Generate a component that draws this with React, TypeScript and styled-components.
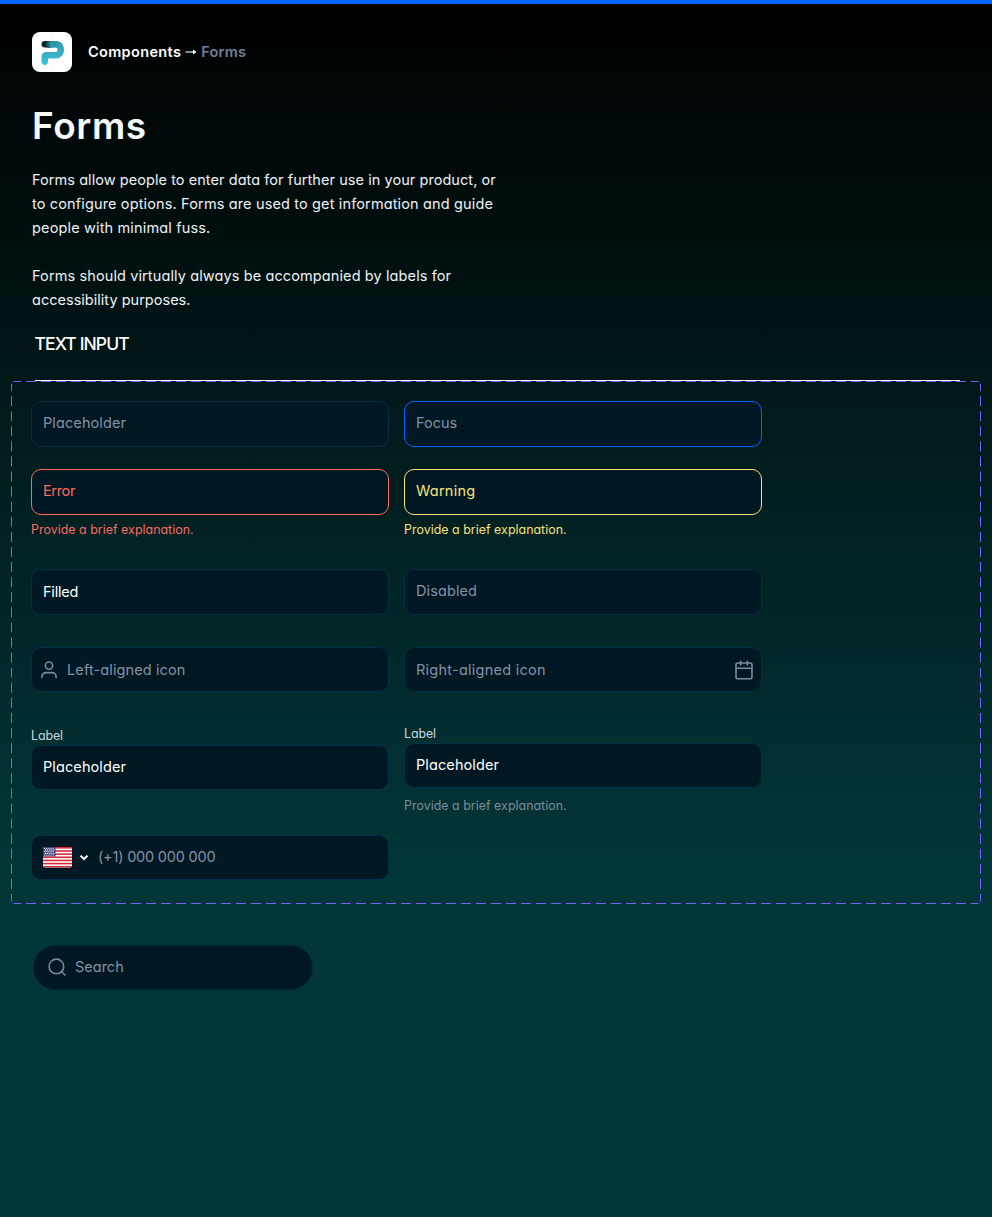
import React from "react";
import styled, { createGlobalStyle } from "styled-components";

const GlobalStyle = createGlobalStyle`
  * { box-sizing: border-box; }
  body {
    margin: 0;
    font-family: Inter, "Open Sans", sans-serif;
    font-feature-settings: "cv11";
    color: #fff;
  }
`;

const Page = styled.main`
  width: 992px;
  height: 1217px;
  border-top: 4px solid #0166ff;
  background: linear-gradient(180deg, #000 0, #023638 866px);
  overflow: hidden;
`;

const Header = styled.header`
  display: flex;
  align-items: center;
  gap: 16px;
  padding: 28px 32px 0;
`;

const Breadcrumb = styled.nav`
  display: flex;
  align-items: center;
  font-size: 14.5px;
  font-weight: 600;
  line-height: 24px;
`;

const Crumb = styled.span<{ $muted?: boolean; $track: number }>`
  color: ${(p) => (p.$muted ? "#718096" : "#fff")};
  letter-spacing: ${(p) => p.$track}px;
`;

const Arrow = styled.svg`
  margin: 0 4px 0 4px;
`;

const Title = styled.h1`
  margin: 30px 32px 0;
  font-size: 37px;
  font-weight: 600;
  line-height: 48px;
  letter-spacing: 0.6px;
  color: #f7fafc;
`;

const Intro = styled.div`
  margin: 18px 32px 0;
  font-size: 14.5px;
  line-height: 24px;
  color: #eef2f5;
`;

const Line = styled.p<{ $track: number; $gap?: boolean }>`
  margin: ${(p) => (p.$gap ? 24 : 0)}px 0 0;
  letter-spacing: ${(p) => p.$track}px;
  white-space: nowrap;
`;

const SectionTitle = styled.h2`
  width: 925px;
  height: 69px;
  margin: 0 0 0 35px;
  padding-top: 20px;
  border-bottom: 1px solid #fff;
  font-size: 17.5px;
  font-weight: 500;
  line-height: 24px;
  letter-spacing: -0.9px;
  text-indent: -0.5px;
`;

const Showcase = styled.section`
  position: relative;
  width: 970px;
  height: 523px;
  margin-left: 11px;
  padding: 20px 20px 0;
`;

const DashedFrame = styled.svg`
  position: absolute;
  inset: 0;
  pointer-events: none;
`;

const Columns = styled.div`
  display: grid;
  grid-template-columns: 358px 358px;
  column-gap: 15px;
`;

const Column = styled.div`
  display: flex;
  flex-direction: column;
`;

const Group = styled.div<{ $top?: number }>`
  display: flex;
  flex-direction: column;
  margin-top: ${(p) => p.$top ?? 0}px;
`;

const Field = styled.div<{ $border?: string; $h?: number; $left?: number }>`
  display: flex;
  align-items: center;
  height: ${(p) => p.$h ?? 46}px;
  padding: 0 7px 0 ${(p) => p.$left ?? 11}px;
  border: 1px solid ${(p) => p.$border ?? "#00304b"};
  border-radius: 10px;
  background: #001824;
`;

const Value = styled.span<{ $color?: string; $track?: number; $up?: number }>`
  font-size: 14.5px;
  line-height: 20px;
  padding-bottom: ${(p) => p.$up ?? 2}px;
  color: ${(p) => p.$color ?? "#8592a5"};
  letter-spacing: ${(p) => p.$track ?? 0}px;
  white-space: nowrap;
`;

const Note = styled.span<{ $color: string; $track?: number }>`
  height: 20px;
  font-size: 12.4px;
  line-height: 20px;
  color: ${(p) => p.$color};
  letter-spacing: ${(p) => p.$track ?? 0.03}px;
`;

const FieldLabel = styled(Note)`
  line-height: 22px;
`;

const Spacer = styled.span<{ $w?: number }>`
  flex: ${(p) => (p.$w ? `0 0 ${p.$w}px` : "1")};
`;

const SearchField = styled(Field)`
  width: 280px;
  margin: 41px 0 0 33px;
  padding-bottom: 1px;
  border-color: #002438;
  border-radius: 23px;
`;

const Logo = () => (
  <svg width="40" height="40" viewBox="0 0 40 40">
    <defs>
      <linearGradient id="teal" x1="0" y1="0" x2="0" y2="1">
        <stop offset="0" stopColor="#2b98aa" />
        <stop offset="1" stopColor="#43c3dc" />
      </linearGradient>
    </defs>
    <rect width="40" height="40" rx="8" fill="#fff" />
    <path d="M20.5 0V40M6 34L34 6M6 6L34 34" stroke="#f1f2f3" strokeWidth="0.4" />
    <path
      d="M17 9H24C29 9 32 13 32 17.7C32 23 28.5 26.4 24 26.4H16V29.3C16 31.8 14.8 33 12.8 33C10.8 33 9.5 31.6 9.5 29.5V25C9.5 22 11.5 20.1 14 20.1H22.6C24.6 20.1 25.6 19.3 25.6 17.9C25.6 16.4 24.5 15.6 22.8 15.6H17Z"
      fill="url(#teal)"
    />
    <path d="M12.8 9H18V15.6H12.8A3.3 3.3 0 0 1 12.8 9Z" fill="#08252c" />
    <circle cx="16.5" cy="12.3" r="3.3" fill="#103e49" />
    <circle cx="18.6" cy="12.3" r="3.3" fill="#1d6b7a" />
    <circle cx="20.8" cy="12.3" r="3.3" fill="#2b98aa" />
  </svg>
);

const UserIcon = () => (
  <svg width="18" height="18" viewBox="0 0 18 18" fill="none" stroke="#7b899d" strokeWidth="1.6" strokeLinecap="round">
    <circle cx="9" cy="4.6" r="3.6" />
    <path d="M1.9 16.6V15.8A4.2 4.2 0 0 1 6.1 11.6H11.9A4.2 4.2 0 0 1 16.1 15.8V16.6" />
  </svg>
);

const CalendarIcon = () => (
  <svg width="20" height="20" viewBox="0 0 20 20" fill="none" stroke="#7b899d" strokeWidth="1.6" strokeLinecap="round">
    <rect x="2" y="3" width="16" height="15.7" rx="2" />
    <path d="M2 8.2H18M6.7 1.4V5M13.3 1.4V5" />
  </svg>
);

const SearchIcon = () => (
  <svg width="18" height="18" viewBox="0 0 18 18" fill="none" stroke="#7b899d" strokeWidth="1.6" strokeLinecap="round">
    <circle cx="8.4" cy="8.4" r="7.3" />
    <path d="M13.7 13.7L17 17" />
  </svg>
);

const Chevron = () => (
  <svg width="10" height="8" viewBox="0 0 10 8" fill="none" stroke="#fff" strokeWidth="2">
    <path d="M1.5 1.6L5 5L8.5 1.6" />
  </svg>
);

const Flag = () => (
  <svg width="29" height="21" viewBox="0 0 29 21">
    <defs>
      <clipPath id="flag"><rect width="29" height="20.5" rx="2" /></clipPath>
    </defs>
    <g clipPath="url(#flag)">
      <rect width="29" height="21" fill="#fff" />
      {[0, 1, 2, 3, 4, 5, 6].map((i) => (
        <rect key={i} y={i * 3.16} width="29" height="1.58" fill="#d62839" />
      ))}
      <rect width="12.5" height="9.4" fill="#3c3b76" />
      {[0, 1, 2, 3, 4].map((r) =>
        [0, 1, 2, 3, 4].map((c) => (
          <circle key={`${r}-${c}`} cx={1.7 + c * 2.1 + (r % 2) * 0.8} cy={1.3 + r * 1.7} r="0.65" fill="#fff" />
        ))
      )}
    </g>
  </svg>
);

const red = "#fc6a60";
const yellow = "#fbe27b";

export default function App() {
  return (
    <>
      <GlobalStyle />
      <Page>
        <Header>
          <Logo />
          <Breadcrumb>
            <Crumb $track={0.35}>Components</Crumb>
            <Arrow width="12" height="8" viewBox="0 0 12 8" fill="none" stroke="#fff" strokeWidth="1.1">
              <path d="M0.5 4H10.5" />
              <path d="M8 1.6L11.4 4L8 6.4Z" fill="#fff" stroke="none" />
            </Arrow>
            <Crumb $muted $track={0.25}>Forms</Crumb>
          </Breadcrumb>
        </Header>
        <Title>Forms</Title>
        <Intro>
          <Line $track={0.06}>Forms allow people to enter data for further use in your product, or</Line>
          <Line $track={0.14}>to configure options. Forms are used to get information and guide</Line>
          <Line $track={0.15}>people with minimal fuss.</Line>
          <Line $track={0.11} $gap>Forms should virtually always be accompanied by labels for</Line>
          <Line $track={0.02}>accessibility purposes.</Line>
        </Intro>
        <SectionTitle>TEXT INPUT</SectionTitle>
        <Showcase>
          <DashedFrame width="970" height="523" fill="none" stroke="#7b61ff">
            <path d="M3 0.5H967M3 522.5H967" strokeDasharray="10 5" strokeDashoffset="3" />
            <path d="M0.5 3V520M969.5 3V520" strokeDasharray="10 5.088" strokeDashoffset="3" />
            <path d="M0.5 3Q0.5 0.5 3 0.5M967 0.5Q969.5 0.5 969.5 3M969.5 520Q969.5 522.5 967 522.5M3 522.5Q0.5 522.5 0.5 520" opacity="0.35" />
          </DashedFrame>
          <Columns>
            <Column>
              <Field><Value $track={0.1}>Placeholder</Value></Field>
              <Group $top={22}>
                <Field $border={red}><Value $color={red} $track={-0.35}>Error</Value></Field>
                <Group $top={5}><Note $color={red}>Provide a brief explanation.</Note></Group>
              </Group>
              <Group $top={29}>
                <Field><Value $color="#fff" $up={0} $track={-0.2}>Filled</Value></Field>
              </Group>
              <Group $top={32}>
                <Field $h={45} $left={8}>
                  <UserIcon /><Spacer $w={9} /><Value $up={0} $track={0.12}>Left-aligned icon</Value>
                </Field>
              </Group>
              <Group $top={33}>
                <FieldLabel $color="#cbd5e0" $track={-0.1}>Label</FieldLabel>
                <Field $h={45}><Value $color="#fff" $up={2} $track={0.1}>Placeholder</Value></Field>
              </Group>
              <Group $top={45}>
                <Field $h={45}>
                  <Flag /><Spacer $w={7} /><Chevron /><Spacer $w={9} /><Value $up={1} $track={-0.2}>(+1) 000 000 000</Value>
                </Field>
              </Group>
            </Column>
            <Column>
              <Field $border="#0166ff"><Value>Focus</Value></Field>
              <Group $top={22}>
                <Field $border={yellow}><Value $color={yellow} $track={0.25}>Warning</Value></Field>
                <Group $top={5}><Note $color={yellow}>Provide a brief explanation.</Note></Group>
              </Group>
              <Group $top={29}>
                <Field><Value $track={0.1}>Disabled</Value></Field>
              </Group>
              <Group $top={32}>
                <Field $h={45}>
                  <Value $up={0} $track={0.25}>Right-aligned icon</Value><Spacer /><CalendarIcon />
                </Field>
              </Group>
              <Group $top={31}>
                <FieldLabel $color="#cbd5e0" $track={-0.1}>Label</FieldLabel>
                <Field $h={45}><Value $color="#fff" $up={2} $track={0.1}>Placeholder</Value></Field>
                <Group $top={7}><FieldLabel $color="#7f8c9f">Provide a brief explanation.</FieldLabel></Group>
              </Group>
            </Column>
          </Columns>
        </Showcase>
        <SearchField $h={45} $left={14}>
          <SearchIcon /><Spacer $w={9} /><Value $up={0}>Search</Value>
        </SearchField>
      </Page>
    </>
  );
}
